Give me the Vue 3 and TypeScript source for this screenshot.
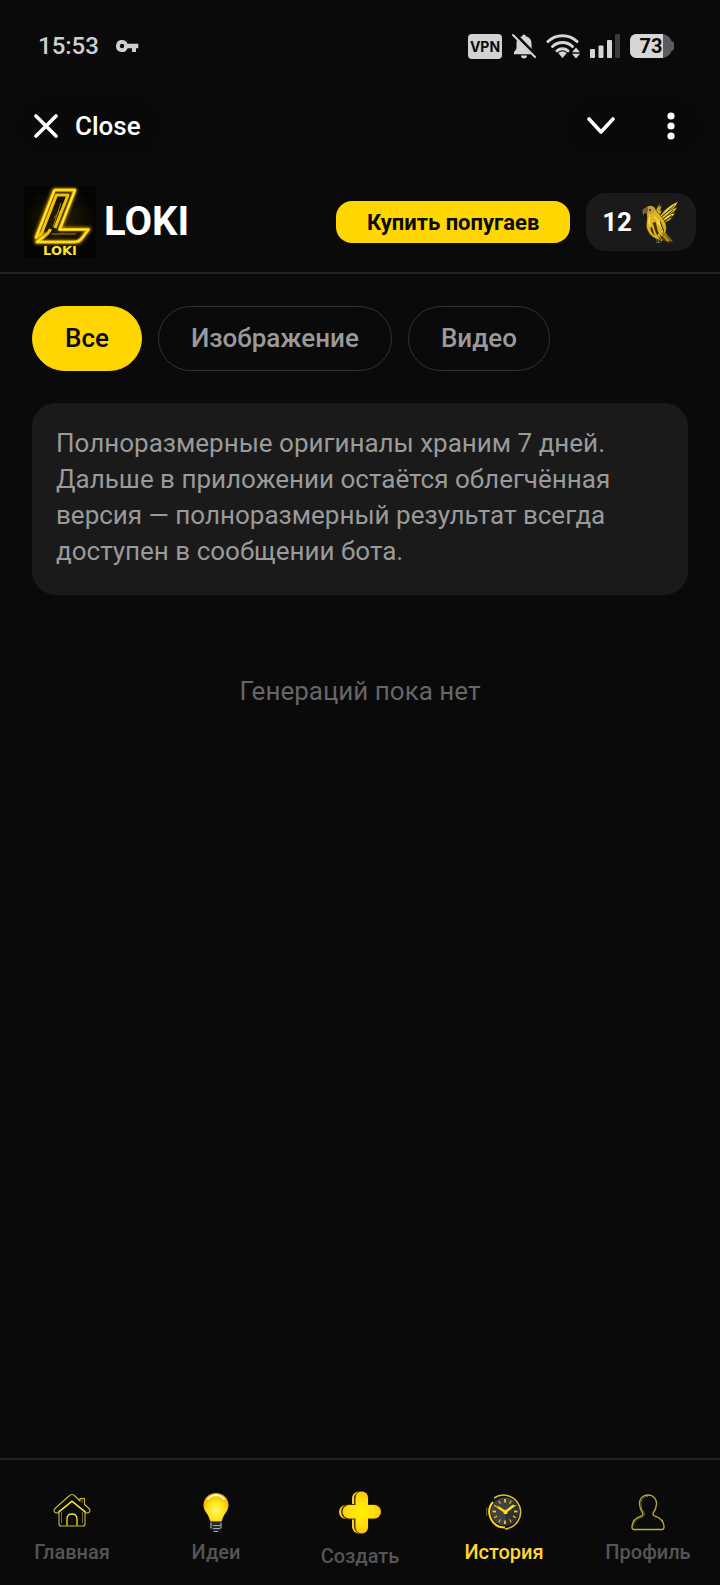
<script setup lang="ts">
import { ref } from 'vue'

interface Tab {
  id: string
  label: string
}

const filters: string[] = ['Все', 'Изображение', 'Видео']
const activeFilter = ref<string>('Все')

const tabs: Tab[] = [
  { id: 'home', label: 'Главная' },
  { id: 'ideas', label: 'Идеи' },
  { id: 'create', label: 'Создать' },
  { id: 'history', label: 'История' },
  { id: 'profile', label: 'Профиль' },
]
const activeTab = ref<string>('history')

const balance = ref<number>(12)
const ticks: number[] = [0, 30, 60, 90, 120, 150, 180, 210, 240, 270, 300, 330]
</script>

<template>
  <div class="screen">
    <div class="status">
      <div class="status-side">
        <span class="time">15:53</span>
        <svg class="key" width="24" height="14" viewBox="0 0 24 14" aria-hidden="true">
          <path fill="#cfcfcf" fill-rule="evenodd" d="M7 1a6 6 0 1 0 5.600 8.200H17V13h4V9.200h2.300V4.800H12.600A6 6 0 0 0 7 1Zm0 3.800a2.200 2.200 0 1 1 0 4.400 2.200 2.200 0 0 1 0-4.400Z" />
        </svg>
      </div>
      <div class="status-side indicators">
        <span class="vpn">VPN</span>
        <svg width="24" height="26" viewBox="0 0 24 26" aria-hidden="true">
          <path fill="#d6d6d6" d="M12 1.500a1.800 1.800 0 0 1 1.800 1.700c3.700.8 5.700 3.700 5.700 7.300v5.300L22 19v2.200H2V19l2.500-3.200v-5.300c0-3.600 2-6.500 5.700-7.300A1.800 1.800 0 0 1 12 1.500ZM9 22.500h6a3 3 0 0 1-6 0Z" />
          <path stroke="#0a0a0a" stroke-width="4" d="M2.500 1 24 23" />
          <path stroke="#d6d6d6" stroke-width="2" stroke-linecap="round" d="m1 2 22 22" />
        </svg>
        <svg width="34" height="26" viewBox="0 0 34 26" aria-hidden="true">
          <g fill="none" stroke="#d6d6d6" stroke-width="3" stroke-linecap="round">
            <path d="M2 8.500a21 21 0 0 1 29 0" />
            <path d="M6.500 13.500a14.500 14.500 0 0 1 20 0" />
            <path d="M11 17.800a8.500 8.500 0 0 1 11 0" />
          </g>
          <path fill="#d6d6d6" d="M16.500 18.500c1.800 0 3.200.6 4.300 1.600l-4.300 4.900-4.300-4.900c1.100-1 2.500-1.600 4.300-1.600Z" />
          <path fill="#d6d6d6" d="m30 14.500 4 4.800h-8ZM30 25.500l4-4.800h-8Z" />
        </svg>
        <svg width="30" height="26" viewBox="0 0 30 26" aria-hidden="true">
          <g fill="#d6d6d6">
            <rect x="0" y="16" width="5" height="9" rx="1" />
            <rect x="8.500" y="12.500" width="5" height="12.500" rx="1" />
            <rect x="17" y="7" width="5" height="18" rx="1" />
          </g>
          <rect x="25" y="1" width="5" height="24" rx="1" fill="#3a3a3a" />
        </svg>
        <span class="battery">73</span>
      </div>
    </div>

    <div class="toolbar">
      <button type="button" class="close">
        <svg width="24" height="24" viewBox="0 0 24 24" aria-hidden="true">
          <path stroke="#fff" stroke-width="3.600" stroke-linecap="round" d="m2 2 20 20M22 2 2 22" />
        </svg>
        Close
      </button>
      <div class="tools">
        <button type="button" class="tool" aria-label="Свернуть">
          <svg width="28" height="18" viewBox="0 0 28 18" aria-hidden="true">
            <path fill="none" stroke="#fff" stroke-width="3.600" stroke-linecap="round" stroke-linejoin="round" d="m2 2 12 13L26 2" />
          </svg>
        </button>
        <button type="button" class="tool" aria-label="Меню">
          <svg width="8" height="28" viewBox="0 0 8 28" aria-hidden="true">
            <g fill="#fff">
              <circle cx="4" cy="4" r="3.600" />
              <circle cx="4" cy="14" r="3.600" />
              <circle cx="4" cy="24" r="3.600" />
            </g>
          </svg>
        </button>
      </div>
    </div>

    <header class="header">
      <svg class="logo" width="72" height="72" viewBox="0 0 72 72" aria-hidden="true">
        <defs>
          <radialGradient id="logoBack">
            <stop offset="0" stop-color="#2a2100" />
            <stop offset="1" stop-color="#040402" />
          </radialGradient>
          <filter id="glow" x="-20%" y="-20%" width="140%" height="140%">
            <feGaussianBlur stdDeviation="1.800" />
          </filter>
        </defs>
        <rect width="72" height="72" fill="url(#logoBack)" />
        <g fill="none" stroke-linejoin="round">
          <path filter="url(#glow)" stroke="#b88600" stroke-width="4" d="M30 4H51L36 43H65L55 56H12L21 48 12 51Z" />
          <path stroke="#f2c400" stroke-width="3" d="M30.500 4H51L37 40 35.500 43.500H64.500L58 52Q55 56 50 56H13L20 50.500Q25 47 26.500 43" />
          <path stroke="#f2c400" stroke-width="3" d="M30.500 4 12 51.500 17.500 47.500 32.500 9H44L31 42" />
          <path stroke="#fff04a" stroke-width="1.200" d="M30.500 4H51L37 40 35.500 43.500H64.500L58 52Q55 56 50 56H13L20 50.500M30.500 4 12 51.500" />
          <path stroke="#a38112" stroke-width="1" d="m37 17-8 24M36 25l-6 7M28 48h24" />
        </g>
        <text class="logo-word" x="36" y="69" text-anchor="middle">LOKI</text>
      </svg>
      <h1 class="brand">LOKI</h1>
      <button type="button" class="buy">Купить попугаев</button>
      <div class="balance">
        <span>{{ balance }}</span>
        <svg width="40" height="44" viewBox="32 32 120 132" aria-hidden="true">
          <g stroke="#241c00" stroke-width="1.500" stroke-linejoin="round">
            <path fill="#c9a51c" d="M70 78 92 40l-1 12 7-4-5 16 6-2-12 26Z" />
            <path fill="#f2dc4a" d="M84 98Q100 56 147 36q-6 14-17 24L98 86Z" />
            <path fill="#e3c832" d="M88 100q16-36 56-46-6 14-20 20l-24 18Z" />
            <path fill="#f5e25e" d="M92 104q14-28 46-34-6 12-18 16l-20 12Z" />
            <path fill="#cba91f" d="M94 108q14-22 36-24-8 12-18 14l-12 6Z" />
            <path fill="#b48b12" d="M62 118q20-4 44 8l26 32-13-3 2 6-19-9-5 5-30-24Z" />
            <path fill="#dfb51b" d="M52 52q18-8 27 8c3 10 12 14 20 24 11 14 16 34 8 48L92 152q-28-6-38-30c-7-18 2-32-2-46Z" />
          </g>
          <path fill="#3f3006" d="m70 100 10 32 12 18 3-6-10-20-6-26ZM92 92l12 30-3 16-8-28ZM60 104l6 24 10 12-6-22ZM88 132l24 22-14-4-14-12Z" />
          <path fill="none" stroke="#fff08a" stroke-width="3" d="M74 82q16 10 20 28M60 84q-4 16 4 30M82 98q16 12 18 32" />
          <path fill="none" stroke="#3d2e05" stroke-width="3" d="m96 82 40-34M100 90l32-28M104 98l24-20M110 138l14 16" />
          <path fill="#c79a45" d="M54 53q14-7 22 3 3 12-8 18l-14-2Z" />
          <path fill="#79603b" d="M54 53q-15 3-15 14 0 9 6 13 2-9 9-11 6-6 0-16Z" />
          <path fill="#15120a" d="M45 72q-3 7 1 13l8-10ZM60 60h5v4h-5Z" />
          <path fill="none" stroke="#6b6b66" stroke-width="3" d="M88 150v8m-8 2 14-2M82 148v6" />
        </svg>
      </div>
    </header>

    <main class="content">
      <div class="filters">
        <button
          v-for="name in filters"
          :key="name"
          type="button"
          class="filter"
          :class="{ active: name === activeFilter }"
          :aria-pressed="name === activeFilter"
          @click="activeFilter = name"
        >
          {{ name }}
        </button>
      </div>
      <p class="note">
        Полноразмерные оригиналы храним 7 дней. Дальше в приложении остаётся облегчённая версия — полноразмерный результат всегда доступен в сообщении бота.
      </p>
      <p class="empty">Генераций пока нет</p>
    </main>

    <nav class="nav">
      <a
        v-for="tab in tabs"
        :key="tab.id"
        :href="'#' + tab.id"
        class="tab"
        :class="{ active: tab.id === activeTab }"
        @click.prevent="activeTab = tab.id"
      >
        <svg v-if="tab.id === 'home'" width="40" height="40" viewBox="0 0 40 40" aria-hidden="true">
          <g fill="none" stroke="#c9bd3c" stroke-width="1.100" stroke-linejoin="round">
            <path d="M20 2.500q-1.500 0-3 1.500L3 16.500q-2 2 0 4 2 1 3.500 0L20 9.500l13.500 11q1.500 1 3.500 0 2-2 0-4l-4.500-4V6.500H28V9l-5-5q-1.500-1.500-3-1.500Z" />
            <path d="M7 20.500V32q0 2 2 2h22q2 0 2-2V20.500" />
          </g>
          <path fill="none" stroke="#f6e532" stroke-width="1.300" d="m6.500 20 13.500-11 13.500 11M15 33.500V27q0-5 5-5t5 5v6.500" />
          <path fill="none" stroke="#716a2b" d="M9.500 20v11.500M30.500 20v11.500M30 7v4" />
        </svg>

        <svg v-else-if="tab.id === 'ideas'" width="40" height="40" viewBox="0 0 40 40" aria-hidden="true">
          <defs>
            <radialGradient id="bulbFill" cx=".5" cy=".62" r=".6">
              <stop offset="0" stop-color="#fff86a" />
              <stop offset=".55" stop-color="#ffe414" />
              <stop offset="1" stop-color="#efae08" />
            </radialGradient>
          </defs>
          <path fill="url(#bulbFill)" d="M20 1C13 1 7.500 6.200 7.500 13c0 4 1.800 6.500 4 9.500 1.300 2 2 5 3 7h11c1-2 1.700-5 3-7 2.200-3 4-5.500 4-9.500C32.500 6.200 27 1 20 1Z" />
          <path fill="none" stroke="#fffbd0" stroke-width="1.800" stroke-linecap="round" d="M12 7q3-3.600 8-3.800 5 .2 8 3.800" />
          <path fill="#24272a" d="M14.500 30h11v7L22 40.500h-4L14.500 37Z" />
          <path fill="none" stroke="#a4a9aa" stroke-width="1.200" d="M15 30.500v6M25 30.500v6M17 33.500h7M17 36.500h7M18 39.500h4" />
        </svg>

        <svg v-else-if="tab.id === 'create'" width="48" height="48" viewBox="0 0 48 48" aria-hidden="true">
          <defs>
            <radialGradient id="plusFill" gradientUnits="userSpaceOnUse" cx="25" cy="24" r="20">
              <stop offset="0" stop-color="#fff200" />
              <stop offset=".6" stop-color="#ffe00c" />
              <stop offset="1" stop-color="#ffc60c" />
            </radialGradient>
          </defs>
          <g fill="#ffd21c">
            <rect x="16" y="3.500" width="14" height="42" rx="7" />
            <rect x="3" y="17" width="38" height="14" rx="7" />
          </g>
          <g fill="none" stroke="#3d2c00" stroke-width="1.800">
            <rect x="19" y="4" width="12.500" height="41" rx="6.200" />
            <rect x="6" y="17" width="38" height="13.500" rx="6.700" />
          </g>
          <g fill="url(#plusFill)">
            <rect x="19.500" y="3.500" width="12.500" height="42" rx="6.200" />
            <rect x="6.500" y="17" width="38.500" height="13.500" rx="6.700" />
          </g>
        </svg>

        <svg v-else-if="tab.id === 'history'" width="40" height="40" viewBox="0 0 40 40" aria-hidden="true">
          <rect x="2" y="15" width="5" height="9" rx="2" fill="#555" />
          <circle cx="20" cy="19.500" r="17" fill="#15140e" />
          <path fill="none" stroke="#d6bd39" stroke-width="1.600" d="M10 6a17 17 0 1 1 11 31" />
          <path fill="none" stroke="#ffd51b" stroke-width="2" d="M9 10a15.500 15.500 0 0 0 12 25.500" />
          <circle cx="21" cy="19.500" r="14" fill="#424242" />
          <path fill="#303030" d="M21 19.500 30 9a14 14 0 0 1-8 24.500Z" />
          <path
            v-for="angle in ticks"
            :key="angle"
            d="M21 7v3.500"
            stroke="#f5c91e"
            :stroke-width="angle % 90 === 0 ? 1.8 : 1"
            :transform="`rotate(${angle} 21 19.500)`"
          />
          <path fill="none" stroke="#ffd91e" stroke-width="2.600" stroke-linecap="round" d="m14.500 15.500 7 4.500 7.500-6" />
          <circle cx="21.500" cy="20" r="2.200" fill="#ffd91e" />
        </svg>

        <svg v-else width="40" height="40" viewBox="0 0 40 40" aria-hidden="true">
          <path fill="none" stroke="#b9ae38" stroke-width="1.300" stroke-linejoin="round" d="M20 3c-5.500 0-8.800 4-8.500 9 .2 4 1.500 6.500 3 8.500 1 2 .3 3-1.500 3.700C7 26.200 4 29.500 4 35q0 2.500 2 2.500h28q2 0 2-2.500c0-5.500-3-8.800-9-10.800-1.800-.7-2.500-1.700-1.500-3.700 1.500-2 2.800-4.500 3-8.500.3-5-3-9-8.500-9Z" />
          <path fill="none" stroke="#6d6824" d="M20 4.500c-4.500 0-7 3.300-7 7.500 0 3.500 1.200 6 3 8.500 1 2.500-.5 4-2 4.700C9 27 6 29.500 5.500 34" />
        </svg>
        <span>{{ tab.label }}</span>
      </a>
    </nav>
  </div>
</template>

<style>
body {
  margin: 0;
  background: #0a0a0a;
}
</style>

<style scoped>
.screen {
  box-sizing: border-box;
  min-height: 100vh;
  display: flex;
  flex-direction: column;
  background: #0a0a0a;
  color: #fff;
  font-family: Roboto, "Noto Sans", sans-serif;
  font-size: 26px;
}

button {
  font: inherit;
  color: inherit;
  border: 0;
  margin: 0;
  cursor: pointer;
}

svg {
  display: block;
  flex: none;
}

.status {
  display: flex;
  justify-content: space-between;
  align-items: center;
  height: 92px;
  margin-bottom: 2px;
  padding: 0 48px 0 38px;
}

.status-side {
  display: flex;
  align-items: center;
  gap: 16px;
}

.time {
  font-size: 24px;
  font-weight: 500;
  color: #cfcfcf;
}

.indicators {
  gap: 10px;
}

.vpn {
  width: 34px;
  border-radius: 4px;
  background: #d2d2d2;
  color: #0a0a0a;
  font-family: Inter, Roboto, sans-serif;
  font-size: 14px;
  font-weight: 700;
  line-height: 25px;
  text-align: center;
}

.battery {
  position: relative;
  width: 42px;
  border-radius: 6px 10px 10px 6px;
  background: linear-gradient(90deg, #d6d6d6 78%, #5c5c5c 78%);
  color: #0a0a0a;
  font-size: 20px;
  font-weight: 700;
  line-height: 24px;
  text-align: center;
}

.battery::after {
  content: "";
  position: absolute;
  right: -2px;
  top: 7px;
  width: 3px;
  height: 10px;
  border-radius: 0 3px 3px 0;
  background: #5c5c5c;
}

.toolbar {
  display: flex;
  justify-content: space-between;
  align-items: center;
  height: 64px;
  padding: 0 16px;
}

.close {
  display: flex;
  align-items: center;
  gap: 17px;
  height: 60px;
  padding: 0 22px 0 18px;
  border-radius: 30px;
  background: #090909;
  font-weight: 500;
}

.tools {
  display: flex;
  gap: 8px;
  padding: 0 2px 0 8px;
  border-radius: 30px;
  background: #090909;
}

.tool {
  display: flex;
  align-items: center;
  justify-content: center;
  width: 62px;
  height: 60px;
  padding: 0;
  background: transparent;
}

.header {
  display: flex;
  align-items: center;
  height: 100px;
  margin-top: 14px;
  padding: 0 24px;
  border-bottom: 2px solid #222;
}

.logo-word {
  fill: #ffe22e;
  font-family: "DejaVu Sans", sans-serif;
  font-size: 13px;
  font-weight: 700;
}

.brand {
  flex: 1;
  margin: 0 0 0 8px;
  font-size: 40px;
  font-weight: 700;
  line-height: 48px;
}

.buy {
  min-width: 234px;
  height: 42px;
  padding: 0 24px;
  border-radius: 16px;
  background: #ffd600;
  color: #0a0a0a;
  font-size: 22px;
  font-weight: 700;
}

.balance {
  display: flex;
  align-items: center;
  gap: 8px;
  height: 58px;
  margin-left: 16px;
  padding: 0 16px;
  border-radius: 20px;
  background: #1a1a1a;
  font-weight: 700;
}

.content {
  flex: 1;
  padding: 32px;
}

.filters {
  display: flex;
  flex-wrap: wrap;
  gap: 16px;
}

.filter {
  height: 65px;
  padding: 0 32px 2px;
  border: 1px solid #333;
  border-radius: 33px;
  background: transparent;
  color: #9a9a9a;
  font-weight: 500;
}

.filter.active {
  border-color: #ffd600;
  background: #ffd600;
  color: #0a0a0a;
}

.note {
  margin: 32px 0 0;
  padding: 22px 24px 26px;
  border-radius: 24px;
  background: #1a1a1a;
  color: #9a9a9a;
  line-height: 36px;
}

.empty {
  margin: 78px 0 0;
  color: #666;
  line-height: 36px;
  text-align: center;
}

.nav {
  display: grid;
  grid-template-columns: repeat(5, 1fr);
  height: 125px;
  border-top: 2px solid #222;
}

.tab {
  display: flex;
  flex-direction: column;
  align-items: center;
  justify-content: center;
  gap: 8px;
  padding-top: 10px;
  color: #555;
  font-size: 20px;
  font-weight: 500;
  line-height: 24px;
  text-decoration: none;
}

.tab.active {
  color: #ffd633;
}
</style>
